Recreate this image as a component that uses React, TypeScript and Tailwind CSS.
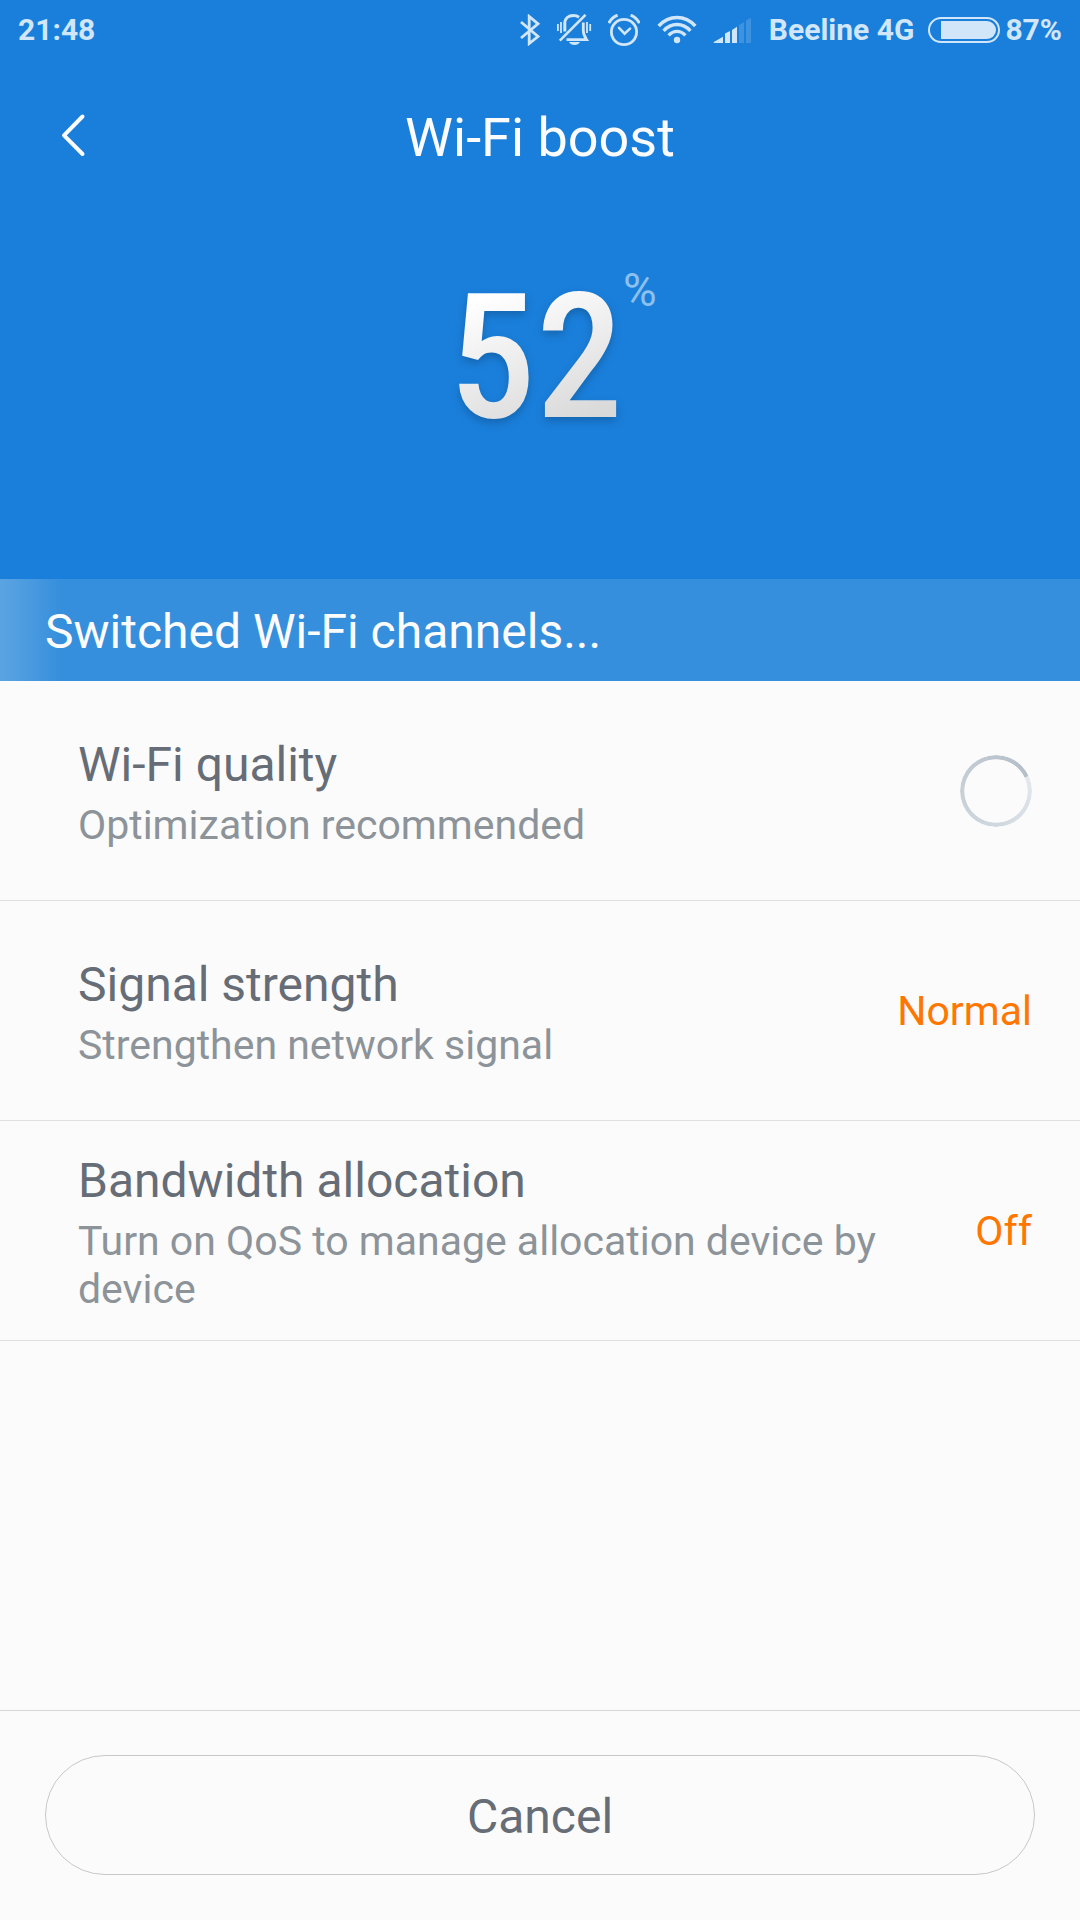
import type { ReactNode } from "react";

function BluetoothIcon() {
  return (
    <svg className="h-8 w-6" viewBox="18 14 24 32" fill="none" stroke="currentColor" strokeWidth="2.8" aria-hidden="true">
      <path d="M21 22 L38 36.5 L29.2 43.5 V16.5 L38 23.8 L21 38" />
    </svg>
  );
}

function MutedBellIcon() {
  return (
    <svg className="h-8 w-9" viewBox="56 14 36 32" fill="none" stroke="currentColor" strokeWidth="2.4" aria-hidden="true">
      <path d="M85.5 14.8 L59.8 40.6" strokeWidth="2.6" />
      <path d="M64.8 31.5 V23.5 C64.8 18.5 68.5 15.6 73.5 15.6 C75.8 15.6 77.6 16.2 79 17.2" strokeWidth="3" />
      <path d="M83.3 22.5 V30.5 C83.3 34.5 84.5 36.5 86.5 39.6 H66.5" strokeWidth="2.8" />
      <path d="M69 42 H80 C79 44 77 45 74.5 45 C72 45 70 44 69 42 Z" fill="currentColor" stroke="none" />
      <path d="M57.9 24 V31 M61 22 V33 M87 22 V33 M90.2 24 V31" strokeWidth="1.8" />
    </svg>
  );
}

function AlarmIcon() {
  return (
    <svg className="h-8 w-8" viewBox="8 13 32 32" fill="none" stroke="currentColor" aria-hidden="true">
      <circle cx="24" cy="31" r="12.6" strokeWidth="2.8" />
      <path d="M19 26.8 L24.6 32.6 L30 27.6" strokeWidth="2.6" strokeLinecap="round" />
      <path d="M8.8 22.2 C10.6 18.6 13.5 15.8 17.6 14.2 M39.4 22.2 C37.6 18.6 34.7 15.8 30.6 14.2" strokeWidth="3" />
    </svg>
  );
}

function WifiIcon() {
  return (
    <svg className="h-8 w-10" viewBox="57 14 40 32" fill="none" stroke="currentColor" strokeWidth="3.4" aria-hidden="true">
      <path d="M58.7 26 C69 14.6 85 14.6 95.3 26" />
      <path d="M63.6 30.8 C71.2 22.4 82.8 22.4 90.4 30.8" />
      <path d="M68.6 35.3 C73.6 30 80.4 30 85.4 35.3" />
      <circle cx="77" cy="40" r="3.2" fill="currentColor" stroke="none" />
    </svg>
  );
}

function SignalIcon() {
  return (
    <svg className="h-8 w-10" viewBox="13 14 40 32" fill="currentColor" aria-hidden="true">
      <path d="M13.8 43 V42 L23 36.8 V43 Z M25 43 V33.5 L30 31 V43 Z M32 43 V30 L37 26.8 V43 Z" />
      <path d="M39 43 V25 L44 22.2 V43 Z M46 43 V20.5 L51 17.8 V43 Z" opacity="0.2" />
    </svg>
  );
}

function BatteryIcon() {
  return (
    <svg className="h-7 w-[72px]" viewBox="0 0 72 28" aria-hidden="true">
      <rect x="1" y="2" width="70" height="24" rx="12" fill="none" stroke="currentColor" strokeWidth="2" />
      <path d="M13 5 H59 A9 9 0 0 1 59 23 H13 Z" fill="currentColor" />
    </svg>
  );
}

function StatusBar() {
  return (
    <div className="flex h-15 items-center justify-between px-[18px] text-[30px] leading-9 font-bold text-[#d1e6f8]">
      <span>21:48</span>
      <div className="flex items-center">
        <BluetoothIcon />
        <span className="ml-3.5"><MutedBellIcon /></span>
        <span className="ml-4"><AlarmIcon /></span>
        <span className="ml-[17px]"><WifiIcon /></span>
        <span className="ml-4"><SignalIcon /></span>
        <span className="ml-4">Beeline 4G</span>
        <span className="ml-3.5"><BatteryIcon /></span>
        <span className="ml-[5px]">87%</span>
      </div>
    </div>
  );
}

function Spinner() {
  return (
    <div
      role="progressbar"
      aria-label="Checking Wi-Fi quality"
      className="size-18 rounded-full bg-[conic-gradient(from_65deg,#e3e8ec,#d0d8df_32%,#c4ccd4_65%,#b3bec8)] [mask:radial-gradient(closest-side,transparent_87%,#000_89%)]"
    />
  );
}

function Row({ title, detail, children }: { title: string; detail: string; children: ReactNode }) {
  return (
    <li className="flex h-55 items-center justify-between gap-6 border-b border-[#e0e0e0] pr-12 pl-[78px]">
      <div className="max-w-[820px] pt-1">
        <h2 className="text-5xl leading-14 text-[#666d76]">{title}</h2>
        <p className="mt-2 text-[41px] leading-12 text-[#8c9399]">{detail}</p>
      </div>
      <div className="shrink-0 text-[41px] leading-12 text-[#ff7700]">{children}</div>
    </li>
  );
}

export default function App() {
  return (
    <div className="flex min-h-screen flex-col bg-[#fbfbfb] font-['Roboto',sans-serif]">
      <header className="bg-[#1a7fdb] text-[#fcfcfc]">
        <StatusBar />
        <div className="grid h-[150px] grid-cols-[1fr_auto_1fr] items-center">
          <button type="button" aria-label="Back" className="ml-[50px] flex size-12 items-center justify-center">
            <svg className="h-12 w-12" viewBox="0 0 48 48" fill="none" stroke="currentColor" strokeWidth="4" strokeLinecap="round" strokeLinejoin="round" aria-hidden="true">
              <path d="M32.5 5.5 L14 24.3 L32.5 43" />
            </svg>
          </button>
          <h1 className="pt-1.5 text-[54px] leading-16">Wi-Fi boost</h1>
        </div>
        <div className="flex h-[369px] items-start justify-center pt-11 pr-2">
          <div className="relative">
            <span className="bg-linear-160 from-white from-20% to-[#d9d9d9] to-80% bg-clip-text font-['Roboto_Condensed','Liberation_Sans_Narrow',sans-serif] text-[174px] leading-[208px] font-medium text-transparent drop-shadow-[0_4px_4px_rgba(0,0,0,0.2)]">
              52
            </span>
            <span className="absolute top-1 left-full text-[46px] leading-[64px] text-[#8cc0ee]">%</span>
          </div>
        </div>
        <p className="bg-[#368fdc] bg-linear-to-r from-[#5ba4e2] to-[#368fdc] to-[60px] px-[45px] pt-[25px] pb-[21px] text-5xl leading-14" role="status">
          Switched Wi-Fi channels...
        </p>
      </header>
      <main className="flex-1">
        <ul>
          <Row title="Wi-Fi quality" detail="Optimization recommended">
            <Spinner />
          </Row>
          <Row title="Signal strength" detail="Strengthen network signal">
            Normal
          </Row>
          <Row title="Bandwidth allocation" detail="Turn on QoS to manage allocation device by device">
            Off
          </Row>
        </ul>
      </main>
      <footer className="border-t border-[#d6d6d6] px-[45px] pt-11 pb-[45px]">
        <button type="button" className="h-30 w-full rounded-full border border-[#c8c8c8] pt-1 text-5xl text-[#666d76]">
          Cancel
        </button>
      </footer>
    </div>
  );
}
